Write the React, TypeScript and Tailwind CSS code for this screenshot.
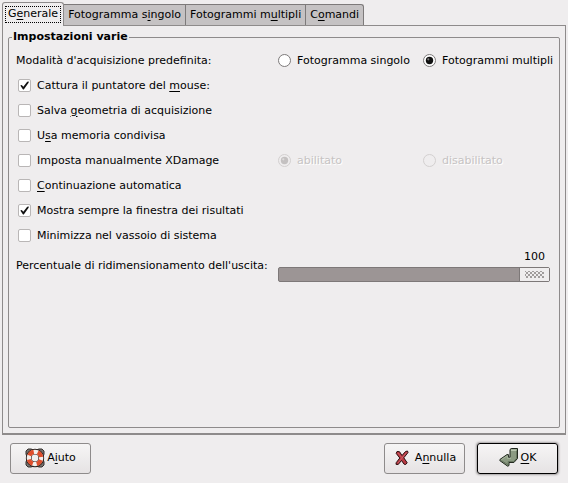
import { useState } from "react";
import type { ReactNode } from "react";

function Mnemonic({ children }: { children: ReactNode }) {
  return <span className="underline decoration-1 underline-offset-2">{children}</span>;
}

const tabs: { id: string; label: ReactNode }[] = [
  { id: "general", label: <>G<Mnemonic>e</Mnemonic>nerale</> },
  { id: "single", label: <>Fotogramma s<Mnemonic>i</Mnemonic>ngolo</> },
  { id: "multi", label: <>Fotogrammi m<Mnemonic>u</Mnemonic>ltipli</> },
  { id: "commands", label: <>C<Mnemonic>o</Mnemonic>mandi</> },
];

function CheckRow({ label, checked = false }: { label: ReactNode; checked?: boolean }) {
  return (
    <label className="flex h-[25px] items-center gap-1.5 pl-0.5">
      <span className="grid size-[13px] shrink-0">
        <input
          type="checkbox"
          defaultChecked={checked}
          className="peer col-start-1 row-start-1 size-[13px] appearance-none rounded-[2px] border border-[#b9b6b6] bg-white"
        />
        <svg
          viewBox="0 0 13 13"
          aria-hidden="true"
          className="pointer-events-none invisible col-start-1 row-start-1 size-[13px] peer-checked:visible"
        >
          <path d="M2.3 6.6 L3.8 5.9 L5.3 7.8 L9.2 2.8 L10.8 2.6 L10.6 3.8 L5.8 10.6 L5 10.6 Z" fill="#111" />
        </svg>
      </span>
      <span>{label}</span>
    </label>
  );
}

type RadioProps = { name: string; label: string; checked?: boolean; disabled?: boolean };

function Radio({ name, label, checked = false, disabled = false }: RadioProps) {
  return (
    <label className="flex items-center gap-1.5 whitespace-nowrap">
      <span className="grid size-[13px] shrink-0">
        <input
          type="radio"
          name={name}
          defaultChecked={checked}
          disabled={disabled}
          className="peer col-start-1 row-start-1 size-[13px] appearance-none rounded-full border border-[#7d7a7a] bg-white disabled:border-[#d3d0d0] disabled:bg-[#efedee]"
        />
        <svg
          viewBox="0 0 13 13"
          aria-hidden="true"
          className="pointer-events-none invisible col-start-1 row-start-1 size-[13px] text-[#111] peer-checked:visible peer-disabled:text-[#c4c1c1]"
        >
          <circle cx="6.5" cy="6.5" r="3.7" fill="currentColor" />
          <circle cx="5.3" cy="5.3" r="1.1" fill="#fff" opacity="0.45" />
        </svg>
      </span>
      <span className={disabled ? "text-[#c6c3c3] [text-shadow:1px_1px_0_#fff]" : ""}>{label}</span>
    </label>
  );
}

function LifebuoyIcon() {
  return (
    <svg viewBox="0 0 20 20" className="size-5" aria-hidden="true">
      <path d="M3 1h3l3 1h2l3-1h3l2 2v3l-1 3v2l1 3v3l-2 2h-3l-3-1H9l-3 1H3l-2-2v-3l1-3V9L1 6V3z" fill="#77726f" stroke="#35302e" />
      <circle cx="10" cy="10" r="6.2" fill="none" stroke="#2d2320" strokeWidth="6" />
      <circle cx="10" cy="10" r="6.2" fill="none" stroke="#f4efec" strokeWidth="4.2" />
      <circle
        cx="10"
        cy="10"
        r="6.2"
        fill="none"
        stroke="#df4e2c"
        strokeWidth="4.2"
        strokeDasharray="5.6 4.14"
        strokeDashoffset="-2.1"
      />
      <circle cx="10" cy="10" r="3.4" fill="#f1efef" />
    </svg>
  );
}

function CancelIcon() {
  return (
    <svg viewBox="0 0 14 16" className="h-4 w-3.5" aria-hidden="true">
      <path
        d="M2 1.5l2.5 .2L7 5.5 10.5 1.5l2 -.5 .5 1.5L8.8 7.8l3.4 5 -1.5 1.7 -1.6 -.3 -2.6 -3.7L3.2 14.5l-2.2 -.2 .2 -1.6L4.8 8 1.2 3.4z"
        fill="#b93a43"
        stroke="#2b0d10"
        strokeLinejoin="round"
      />
      <path d="M3 3l3.8 4.6M11.5 2.6L3 13" stroke="#d9757c" fill="none" strokeWidth="0.6" />
    </svg>
  );
}

function ApplyIcon() {
  return (
    <svg viewBox="0 0 20 19" className="h-[19px] w-5" aria-hidden="true">
      <path
        d="M11 1.5l1.2-1h6.3v10l-3.6 4H10v3l-1.3 .7L.8 12.6l.2-1.2L8 6.6h1.4v2.6H11z"
        fill="#8b9a82"
        stroke="#1d241b"
        strokeLinejoin="round"
      />
      <path d="M12 1.6h5.8l-1 1.4H12z" fill="#b9c6b0" />
      <path d="M8.4 7.6v2.8H12M8.2 7.8L2.4 11.6" fill="none" stroke="#aebba5" strokeWidth="0.8" />
      <path d="M17.6 3v7.2l-3 3.4H9.2v3.2L2.4 12.6" fill="none" stroke="#5f6e58" strokeWidth="0.9" />
    </svg>
  );
}

const buttonBase =
  "flex h-[31px] items-center justify-center rounded-[3px] border bg-linear-to-b from-[#f6f5f5] to-[#e6e3e4] pb-0.5";

export default function App() {
  const [tab, setTab] = useState("general");
  const [scale, setScale] = useState(100);

  return (
    <div className="min-h-screen bg-[#efedee] px-0.5 pt-0.5 pb-2 font-['DejaVu_Sans',sans-serif] text-[11px] leading-[14px] text-black">
      <div role="tablist" className="flex items-end">
        {tabs.map(({ id, label }) => (
          <button
            key={id}
            type="button"
            role="tab"
            aria-selected={tab === id}
            onClick={() => setTab(id)}
            className={
              tab === id
                ? "z-10 -mb-px h-6 rounded-t-[3px] border border-b-0 border-[#8e8b8b] bg-[#efedee] px-[3px] py-1"
                : "h-[21px] border border-b-0 border-l-0 border-[#7d7a7a] bg-[#c5c2c3] px-1 last:rounded-tr-[3px]"
            }
          >
            <span className={tab === id ? "block h-[15px] px-0.5 outline-1 outline-dotted outline-black" : ""}>
              {label}
            </span>
          </button>
        ))}
      </div>

      <main role="tabpanel" className="border border-b-2 border-[#8e8b8b] px-[5px] pt-1 pb-[5px]">
        <fieldset className="min-h-[398px] min-w-0 rounded-[2px] border border-[#8e8b8b] pr-[9px] pb-2 pl-[7px]">
          <legend className="-ml-1 px-px font-bold">Impostazioni varie</legend>

          <div className="grid grid-cols-[262px_1fr] items-center pt-1">
            <span id="mode-label">Modalità d'acquisizione predefinita:</span>
            <div role="radiogroup" aria-labelledby="mode-label" className="grid h-[25px] grid-cols-[145px_1fr] items-center">
              <Radio name="mode" label="Fotogramma singolo" />
              <Radio name="mode" label="Fotogrammi multipli" checked />
            </div>
          </div>

          <CheckRow checked label={<>Cattura il puntatore del <Mnemonic>m</Mnemonic>ouse:</>} />
          <CheckRow label={<>Salva <Mnemonic>g</Mnemonic>eometria di acquisizione</>} />
          <CheckRow label={<>U<Mnemonic>s</Mnemonic>a memoria condivisa</>} />
          <div className="grid grid-cols-[262px_1fr] items-center">
            <CheckRow label="Imposta manualmente XDamage" />
            <div role="radiogroup" aria-label="XDamage" className="grid grid-cols-[145px_1fr] items-center">
              <Radio name="xdamage" label="abilitato" checked disabled />
              <Radio name="xdamage" label="disabilitato" disabled />
            </div>
          </div>
          <CheckRow label={<><Mnemonic>C</Mnemonic>ontinuazione automatica</>} />
          <CheckRow checked label="Mostra sempre la finestra dei risultati" />
          <CheckRow label="Minimizza nel vassoio di sistema" />

          <div className="grid grid-cols-[262px_1fr] items-center pt-0.5">
            <label htmlFor="scale">Percentuale di ridimensionamento dell'uscita:</label>
            <div className="flex flex-col gap-[3px]">
              <output htmlFor="scale" className="pr-[5px] text-right">
                {scale}
              </output>
              <input
                id="scale"
                type="range"
                min={1}
                max={100}
                value={scale}
                onChange={(e) => setScale(Number(e.target.value))}
                className="h-[15px] w-full appearance-none rounded-[2px] border border-[#7d7878] bg-[#9c9595] [&::-webkit-slider-thumb]:box-border [&::-webkit-slider-thumb]:h-[13px] [&::-webkit-slider-thumb]:w-[29px] [&::-webkit-slider-thumb]:appearance-none [&::-webkit-slider-thumb]:border-x-[5px] [&::-webkit-slider-thumb]:border-y-[3px] [&::-webkit-slider-thumb]:border-[#efedee] [&::-webkit-slider-thumb]:bg-[#efedee] [&::-webkit-slider-thumb]:bg-[linear-gradient(45deg,transparent_38%,#a09c9c_38%_62%,transparent_62%),linear-gradient(-45deg,transparent_38%,#a09c9c_38%_62%,transparent_62%)] [&::-webkit-slider-thumb]:bg-[length:4px_4px] [&::-webkit-slider-thumb]:shadow-[-1px_0_0_#7d7878]"
              />
            </div>
          </div>
        </fieldset>
      </main>

      <footer className="flex items-center gap-3 px-2 pt-2">
        <button type="button" className={`${buttonBase} mr-auto w-[81px] gap-0.5 border-[#8e8b8b]`}>
          <LifebuoyIcon />
          <span>A<Mnemonic>i</Mnemonic>uto</span>
        </button>
        <button type="button" className={`${buttonBase} w-[81px] gap-1.5 border-[#8e8b8b] pl-0.5`}>
          <CancelIcon />
          <span>A<Mnemonic>n</Mnemonic>nulla</span>
        </button>
        <button
          type="button"
          className={`${buttonBase} w-[81px] gap-0.5 border-black shadow-[0_0_2px_1px_#a5a2a2]`}
        >
          <ApplyIcon />
          <span><Mnemonic>O</Mnemonic>K</span>
        </button>
      </footer>
    </div>
  );
}
